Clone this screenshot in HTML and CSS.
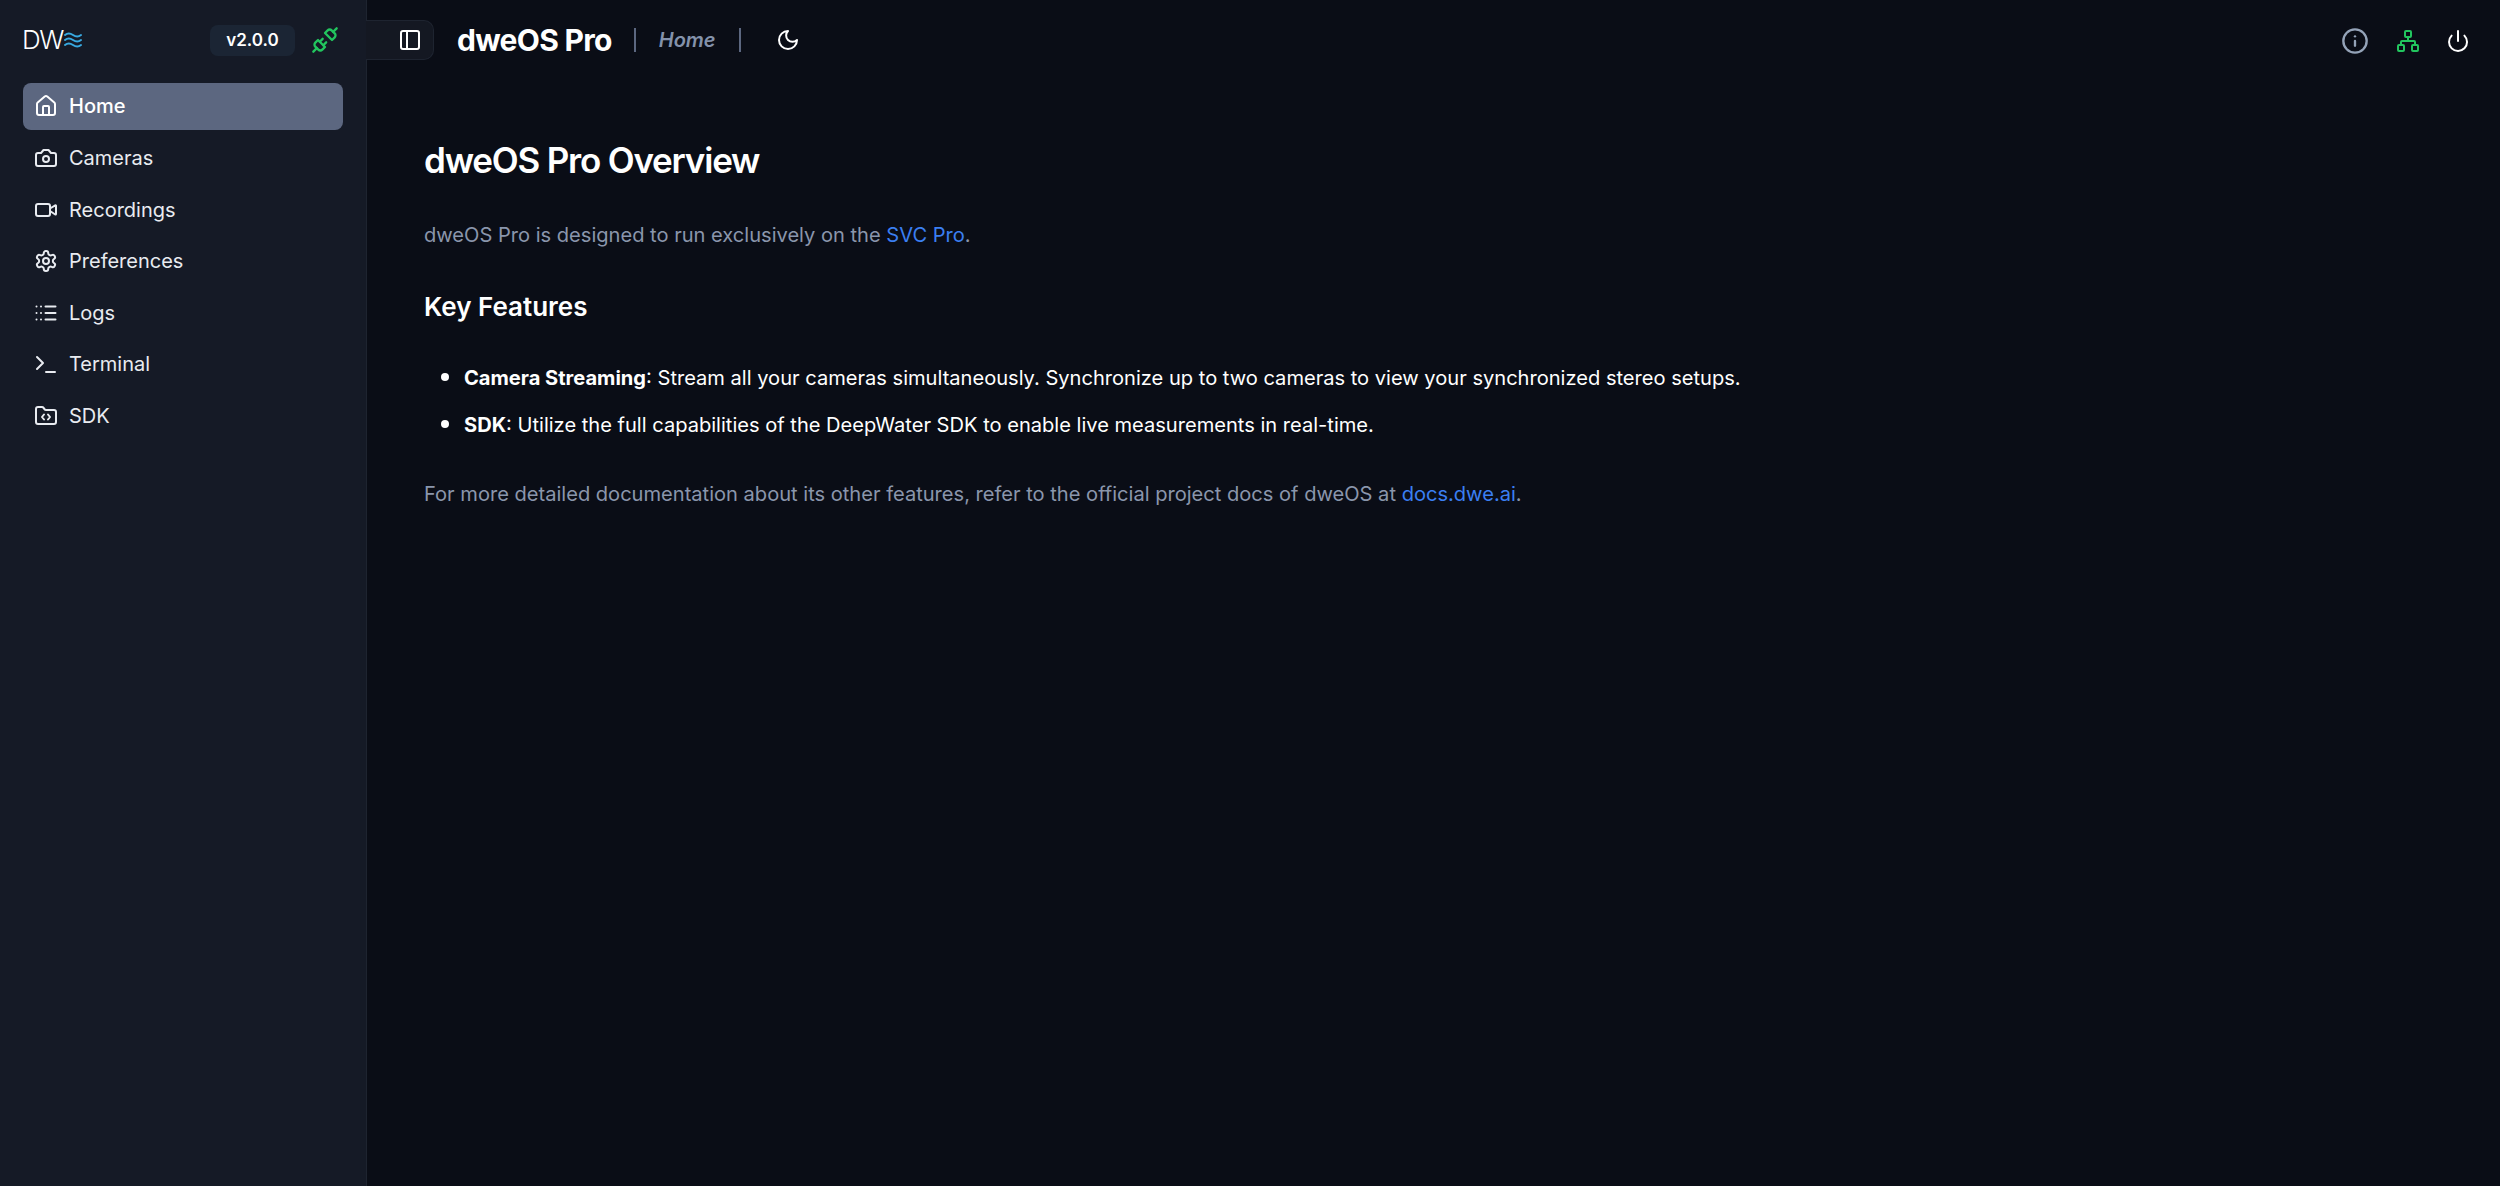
FILE: index.html
```html
<!DOCTYPE html>
<html lang="en">
<head>
    <meta charset="UTF-8">
    <meta name="viewport" content="width=device-width, initial-scale=1.0">
    <title>dweOS Pro</title>
    <link rel="stylesheet" href="styles.css">
</head>
<body>
    <aside class="sidebar">
        <div class="sidebar-top">
            <div class="logo">
                <span class="logo-text">DW</span>
                <svg class="logo-waves" viewBox="0 0 18 18" fill="none" stroke-linecap="round">
                    <path d="M1 4c2.500-2 5-2 8 0s5.500 2 8 0"/>
                    <path d="M1 9c2.500-2 5-2 8 0s5.500 2 8 0"/>
                    <path d="M1 14c2.500-2 5-2 8 0s5.500 2 8 0"/>
                </svg>
            </div>
            <span class="version">v2.0.0</span>
            <svg class="icon icon-plug" viewBox="0 0 24 24">
                <path d="m19 5 3-3"/><path d="m2 22 3-3"/>
                <path d="M6.300 20.300a2.400 2.400 0 0 0 3.400 0L12 18l-6-6-2.300 2.300a2.400 2.400 0 0 0 0 3.400Z"/>
                <path d="M7.500 13.500 10 11"/><path d="M10.500 16.500 13 14"/>
                <path d="m12 6 6 6 2.300-2.300a2.400 2.400 0 0 0 0-3.400l-2.600-2.600a2.400 2.400 0 0 0-3.400 0Z"/>
            </svg>
        </div>
        <nav class="nav">
            <a class="nav-item active">
                <svg class="icon" viewBox="0 0 24 24"><path d="M15 21v-8a1 1 0 0 0-1-1h-4a1 1 0 0 0-1 1v8"/><path d="M3 10a2 2 0 0 1 .709-1.528l7-5.999a2 2 0 0 1 2.582 0l7 5.999A2 2 0 0 1 21 10v9a2 2 0 0 1-2 2H5a2 2 0 0 1-2-2z"/></svg>
                Home
            </a>
            <a class="nav-item">
                <svg class="icon" viewBox="0 0 24 24"><path d="M14.500 4h-5L7 7H4a2 2 0 0 0-2 2v9a2 2 0 0 0 2 2h16a2 2 0 0 0 2-2V9a2 2 0 0 0-2-2h-3l-2.500-3z"/><circle cx="12" cy="13" r="3"/></svg>
                Cameras
            </a>
            <a class="nav-item">
                <svg class="icon" viewBox="0 0 24 24"><path d="m16 13 5.223 3.482a.5.5 0 0 0 .777-.416V7.870a.5.5 0 0 0-.752-.432L16 10.500"/><rect x="2" y="6" width="14" height="12" rx="2"/></svg>
                Recordings
            </a>
            <a class="nav-item">
                <svg class="icon" viewBox="0 0 24 24"><path d="M12.220 2h-.44a2 2 0 0 0-2 2v.18a2 2 0 0 1-1 1.730l-.43.25a2 2 0 0 1-2 0l-.15-.08a2 2 0 0 0-2.730.73l-.22.38a2 2 0 0 0 .73 2.730l.15.1a2 2 0 0 1 1 1.720v.51a2 2 0 0 1-1 1.740l-.15.09a2 2 0 0 0-.73 2.730l.22.38a2 2 0 0 0 2.730.73l.15-.08a2 2 0 0 1 2 0l.43.25a2 2 0 0 1 1 1.730V20a2 2 0 0 0 2 2h.44a2 2 0 0 0 2-2v-.18a2 2 0 0 1 1-1.730l.43-.25a2 2 0 0 1 2 0l.15.08a2 2 0 0 0 2.730-.73l.22-.39a2 2 0 0 0-.73-2.730l-.15-.08a2 2 0 0 1-1-1.740v-.5a2 2 0 0 1 1-1.740l.15-.09a2 2 0 0 0 .73-2.730l-.22-.38a2 2 0 0 0-2.730-.73l-.15.08a2 2 0 0 1-2 0l-.43-.25a2 2 0 0 1-1-1.730V4a2 2 0 0 0-2-2z"/><circle cx="12" cy="12" r="3"/></svg>
                Preferences
            </a>
            <a class="nav-item">
                <svg class="icon" viewBox="0 0 24 24"><path d="M2.500 5.500h.01M7 5.500h.01M2.500 12h.01M7 12h.01M2.500 18.500h.01M7 18.500h.01M11.500 5.500h10M11.500 12h10M11.500 18.500h10"/></svg>
                Logs
            </a>
            <a class="nav-item">
                <svg class="icon" viewBox="0 0 24 24"><path d="m3 17 6-6-6-6"/><path d="M12 20h9"/></svg>
                Terminal
            </a>
            <a class="nav-item">
                <svg class="icon" viewBox="0 0 24 24"><path d="M10 10.500 8 13l2 2.500"/><path d="m14 10.500 2 2.500-2 2.500"/><path d="M20 20a2 2 0 0 0 2-2V8a2 2 0 0 0-2-2h-7.900a2 2 0 0 1-1.690-.9L9.600 3.900A2 2 0 0 0 7.930 3H4a2 2 0 0 0-2 2v13a2 2 0 0 0 2 2z"/></svg>
                SDK
            </a>
        </nav>
    </aside>

    <div class="main">
        <header class="topbar">
            <button class="panel-toggle">
                <svg class="icon" viewBox="0 0 24 24"><rect x="3" y="3" width="18" height="18" rx="2"/><path d="M9 3v18"/></svg>
            </button>
            <span class="app-name">dweOS Pro</span>
            <span class="page-name">Home</span>
            <svg class="icon icon-moon" viewBox="0 0 24 24"><path d="M12 3a6 6 0 0 0 9 9 9 9 0 1 1-9-9Z"/></svg>
            <div class="topbar-right">
                <svg class="icon icon-info" viewBox="0 0 24 24"><circle cx="12" cy="12" r="10"/><path d="M12 16v-4"/><path d="M12 8h.01"/></svg>
                <svg class="icon icon-net" viewBox="0 0 24 24"><rect x="16" y="16" width="6" height="6" rx="1"/><rect x="2" y="16" width="6" height="6" rx="1"/><rect x="9" y="2" width="6" height="6" rx="1"/><path d="M5 16v-3a1 1 0 0 1 1-1h12a1 1 0 0 1 1 1v3"/><path d="M12 12V8"/></svg>
                <svg class="icon" viewBox="0 0 24 24"><path d="M12 2v10"/><path d="M18.400 6.600a9 9 0 1 1-12.770.04"/></svg>
            </div>
        </header>

        <section class="content">
            <h1>dweOS Pro Overview</h1>
            <p>dweOS Pro is designed to run exclusively on the <a href="#">SVC Pro</a>.</p>
            <h2>Key Features</h2>
            <ul>
                <li><strong>Camera Streaming</strong>: Stream all your cameras simultaneously. Synchronize up to two cameras to view your synchronized stereo setups.</li>
                <li><strong>SDK</strong>: Utilize the full capabilities of the DeepWater SDK to enable live measurements in real-time.</li>
            </ul>
            <p>For more detailed documentation about its other features, refer to the official project docs of dweOS at <a href="#">docs.dwe.ai</a>.</p>
        </section>
    </div>
</body>
</html>
```

FILE: styles.css
```css
/* Page */
* {
    box-sizing: border-box;
}

body {
    font-family: Inter, "Noto Sans", sans-serif;
    display: flex;
    height: 100vh;
    margin: 0;
    background: #0a0d16;
    color: #fff;
    overflow: hidden;
}

.icon {
    width: 24px;
    height: 24px;
    flex-shrink: 0;
    fill: none;
    stroke: currentColor;
    stroke-width: 2;
    stroke-linecap: round;
    stroke-linejoin: round;
}

/* Sidebar */
.sidebar {
    width: 367px;
    flex-shrink: 0;
    background: #151a26;
    border-right: 1px solid #1e2430;
    padding: 20px 23px;
}

.sidebar-top {
    display: flex;
    align-items: center;
    height: 40px;
}

.logo {
    display: flex;
    align-items: center;
    width: 187px;
}

.logo-text {
    font-size: 26px;
    font-weight: 300;
    letter-spacing: -1.500px;
    line-height: 1;
    margin-left: -1px;
}

.logo-waves {
    width: 18px;
    height: 18px;
    margin-left: 1px;
    stroke: #38a9e0;
    stroke-width: 2;
}

.version {
    width: 85px;
    height: 31px;
    line-height: 31px;
    text-align: center;
    background: #1b2534;
    border-radius: 8px;
    font-size: 17px;
    font-weight: 600;
}

.icon-plug {
    width: 28px;
    height: 28px;
    margin-left: 16px;
    color: #22c55e;
}

.nav {
    display: flex;
    flex-direction: column;
    gap: 4.500px;
    margin-top: 23px;
}

.nav-item {
    display: flex;
    align-items: center;
    gap: 11px;
    height: 47px;
    padding: 0 11px;
    border-radius: 8px;
    font-size: 20px;
    color: #e8ebf0;
}

.nav-item.active {
    padding-bottom: 2px;
    background: #5c6780;
    color: #fff;
    font-weight: 500;
}

/* Top bar */
.main {
    flex: 1;
    min-width: 0;
}

.topbar {
    display: flex;
    align-items: center;
    height: 80px;
    padding-right: 30px;
}

.panel-toggle {
    display: flex;
    align-items: center;
    justify-content: flex-end;
    width: 68px;
    height: 40px;
    margin-left: -1px;
    padding: 0 11px 0 0;
    background: #141822;
    border: 1px solid #1e2430;
    border-left: 0;
    border-radius: 0 10px 10px 0;
    color: #fff;
}

.app-name {
    margin-left: 23px;
    padding-right: 22px;
    font-size: 30px;
    font-weight: 700;
    letter-spacing: -0.700px;
}

.page-name {
    padding: 0 23px;
    border-left: 2px solid #5c6780;
    border-right: 2px solid #5c6780;
    font-size: 20px;
    font-style: italic;
    font-weight: 600;
    color: #8492ab;
}

.icon-moon {
    margin-left: 35px;
}

.topbar-right {
    display: flex;
    align-items: center;
    gap: 26.500px;
    margin-left: auto;
    padding-top: 1px;
}

.icon-info {
    width: 28px;
    height: 28px;
    color: #94a3b8;
}

.icon-net {
    color: #22c55e;
}

/* Content */
.content {
    padding: 0 57px;
    font-size: 20.080px;
    line-height: 28px;
}

.content h1 {
    margin: 56px 0 0;
    font-size: 35px;
    line-height: 48px;
    font-weight: 600;
    letter-spacing: -1.200px;
}

.content h2 {
    margin: 40px 0 0;
    font-size: 26px;
    line-height: 36px;
    font-weight: 600;
}

.content p {
    margin: 37px 0 0;
    color: #8a96ac;
}

.content a {
    color: #3b7ff2;
    text-decoration: none;
}

.content ul {
    margin: 37px 0 0;
    padding-left: 40px;
}

.content li {
    margin-bottom: 17px;
}

.content li::marker {
    font-size: 26px;
}

.content ul + p {
    margin-top: 41px;
}

.content li strong {
    font-weight: 700;
}
```
